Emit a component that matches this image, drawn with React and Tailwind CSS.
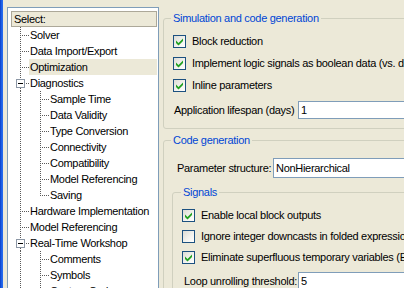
import React from "react";

const tree = [
  { t: "Solver", l: 0 },
  { t: "Data Import/Export", l: 0 },
  { t: "Optimization", l: 0, sel: true },
  { t: "Diagnostics", l: 0, box: true },
  { t: "Sample Time", l: 1 },
  { t: "Data Validity", l: 1 },
  { t: "Type Conversion", l: 1 },
  { t: "Connectivity", l: 1 },
  { t: "Compatibility", l: 1 },
  { t: "Model Referencing", l: 1 },
  { t: "Saving", l: 1, last: true },
  { t: "Hardware Implementation", l: 0 },
  { t: "Model Referencing", l: 0 },
  { t: "Real-Time Workshop", l: 0, box: true },
  { t: "Comments", l: 1 },
  { t: "Symbols", l: 1 },
  { t: "Custom Code", l: 1 },
];

const DOT = "#5a5a5a";

function Connector({ l, box, last }) {
  const w = 18 + 20 * l;
  return (
    <svg width={w} height="16" className="shrink-0 block" shapeRendering="crispEdges">
      {l === 0 && !box && (
        <>
          <line x1="9.5" y1="0" x2="9.5" y2="16" stroke={DOT} strokeDasharray="1 1" />
          <line x1="11" y1="8.5" x2="18" y2="8.5" stroke={DOT} strokeDasharray="1 1" />
        </>
      )}
      {l === 0 && box && (
        <>
          <line x1="9.5" y1="0" x2="9.5" y2="4" stroke={DOT} strokeDasharray="1 1" />
          <line x1="9.5" y1="13" x2="9.5" y2="16" stroke={DOT} strokeDasharray="1 1" />
          <rect x="5.5" y="4.5" width="8" height="8" fill="#fff" stroke="#8c97a5" />
          <line x1="7" y1="8.5" x2="12" y2="8.5" stroke="#000" />
          <line x1="15" y1="8.5" x2="18" y2="8.5" stroke={DOT} strokeDasharray="1 1" />
        </>
      )}
      {l === 1 && (
        <>
          <line x1="9.5" y1="0" x2="9.5" y2="16" stroke={DOT} strokeDasharray="1 1" />
          <line x1="29.5" y1="0" x2="29.5" y2={last ? "9" : "16"} stroke={DOT} strokeDasharray="1 1" />
          <line x1="31" y1="8.5" x2="38" y2="8.5" stroke={DOT} strokeDasharray="1 1" />
        </>
      )}
    </svg>
  );
}

function Check({ checked }) {
  return (
    <span className="w-[13px] h-[13px] shrink-0 border border-[#1c5180] bg-[linear-gradient(135deg,#dcdcd5,#f4f4f0_60%,#ffffff)] flex items-center justify-center">
      {checked && (
        <svg width="11" height="11" viewBox="0 0 11 11" className="block">
          <path d="M2 4.5 L4.5 7 L9 2.5 L9 5 L4.5 9.5 L2 7 Z" fill="#21a121" />
        </svg>
      )}
    </span>
  );
}

function CheckRow({ checked, label, h }) {
  return (
    <div className={`flex items-center ${h}`}>
      <Check checked={checked} />
      <span className="ml-[6px] whitespace-nowrap">{label}</span>
    </div>
  );
}

export default function App() {
  return (
    <div className="w-[404px] h-[288px] overflow-hidden bg-[#ece9d8] flex font-['Liberation_Sans',_Arial,_sans-serif] text-[11px] tracking-[-0.3px] text-black">
      <div className="w-[3px] shrink-0 bg-[linear-gradient(to_right,#0a3cc4,#1c5fe6,#2a6ef0)]" />
      <div className="pl-[4px] pt-[7px] shrink-0">
        <div className="w-[152px] h-[300px] border border-[#7f9db9] bg-white pl-[3px] pr-[1px] pt-[3px]">
          <div className="h-[16px] border border-[#aca899] bg-[#ece9d8] pl-[2px] flex items-center leading-[14px]">
            Select:
          </div>
          <div className="flex flex-col">
            {tree.map((r, i) => (
              <div key={i} className="flex h-[16px] leading-[16px]">
                <Connector l={r.l} box={r.box} last={r.last} />
                <span className={`flex-1 px-[1px] whitespace-nowrap ${r.sel ? "bg-[#ece9d8]" : ""}`}>
                  {r.t}
                </span>
              </div>
            ))}
          </div>
        </div>
      </div>
      <div className="w-[420px] shrink-0 pl-[4px] pt-[12px] flex flex-col">
        <fieldset className="border border-[#d0d0bf] rounded-[3px] pl-[7px] pb-[9px] min-w-0">
          <legend className="px-[2px] leading-[12px] text-[#0046d5]">Simulation and code generation</legend>
          <div className="pl-[2px] pt-[6px]">
            <CheckRow checked label="Block reduction" h="h-[22px]" />
            <CheckRow checked label="Implement logic signals as boolean data (vs. double)" h="h-[22px]" />
            <CheckRow checked label="Inline parameters" h="h-[22px]" />
            <div className="flex items-center mt-[5px] h-[18px]">
              <span className="w-[125px] pl-[1px] whitespace-nowrap">Application lifespan (days)</span>
              <div className="w-[200px] h-[18px] border border-[#7f9db9] bg-white pl-[2px] flex items-center">1</div>
            </div>
          </div>
        </fieldset>
        <fieldset className="mt-[5px] border border-[#d0d0bf] rounded-[3px] pl-[7px] pb-[9px] min-w-0">
          <legend className="px-[2px] leading-[12px] text-[#0046d5]">Code generation</legend>
          <div className="pt-[12px]">
            <div className="flex items-center h-[20px] ml-[6px]">
              <span className="w-[96px] whitespace-nowrap">Parameter structure:</span>
              <div className="w-[200px] h-[20px] border border-[#7f9db9] bg-white pl-[2px] flex items-center">NonHierarchical</div>
            </div>
            <fieldset className="mt-[8px] ml-[1px] border border-[#d0d0bf] rounded-[3px] pl-[8px] pb-[9px] min-w-0">
              <legend className="px-[2px] leading-[12px] text-[#0046d5]">Signals</legend>
              <div className="pl-[1px] pt-[7px]">
                <CheckRow checked label="Enable local block outputs" h="h-[21px]" />
                <CheckRow label="Ignore integer downcasts in folded expressions" h="h-[21px]" />
                <CheckRow checked label="Eliminate superfluous temporary variables (Expression folding)" h="h-[21px]" />
                <div className="flex items-center mt-[4px] h-[18px]">
                  <span className="w-[116px] pl-[2px] whitespace-nowrap">Loop unrolling threshold:</span>
                  <div className="w-[200px] h-[18px] border border-[#7f9db9] bg-white pl-[2px] flex items-center">5</div>
                </div>
              </div>
            </fieldset>
          </div>
        </fieldset>
      </div>
    </div>
  );
}
